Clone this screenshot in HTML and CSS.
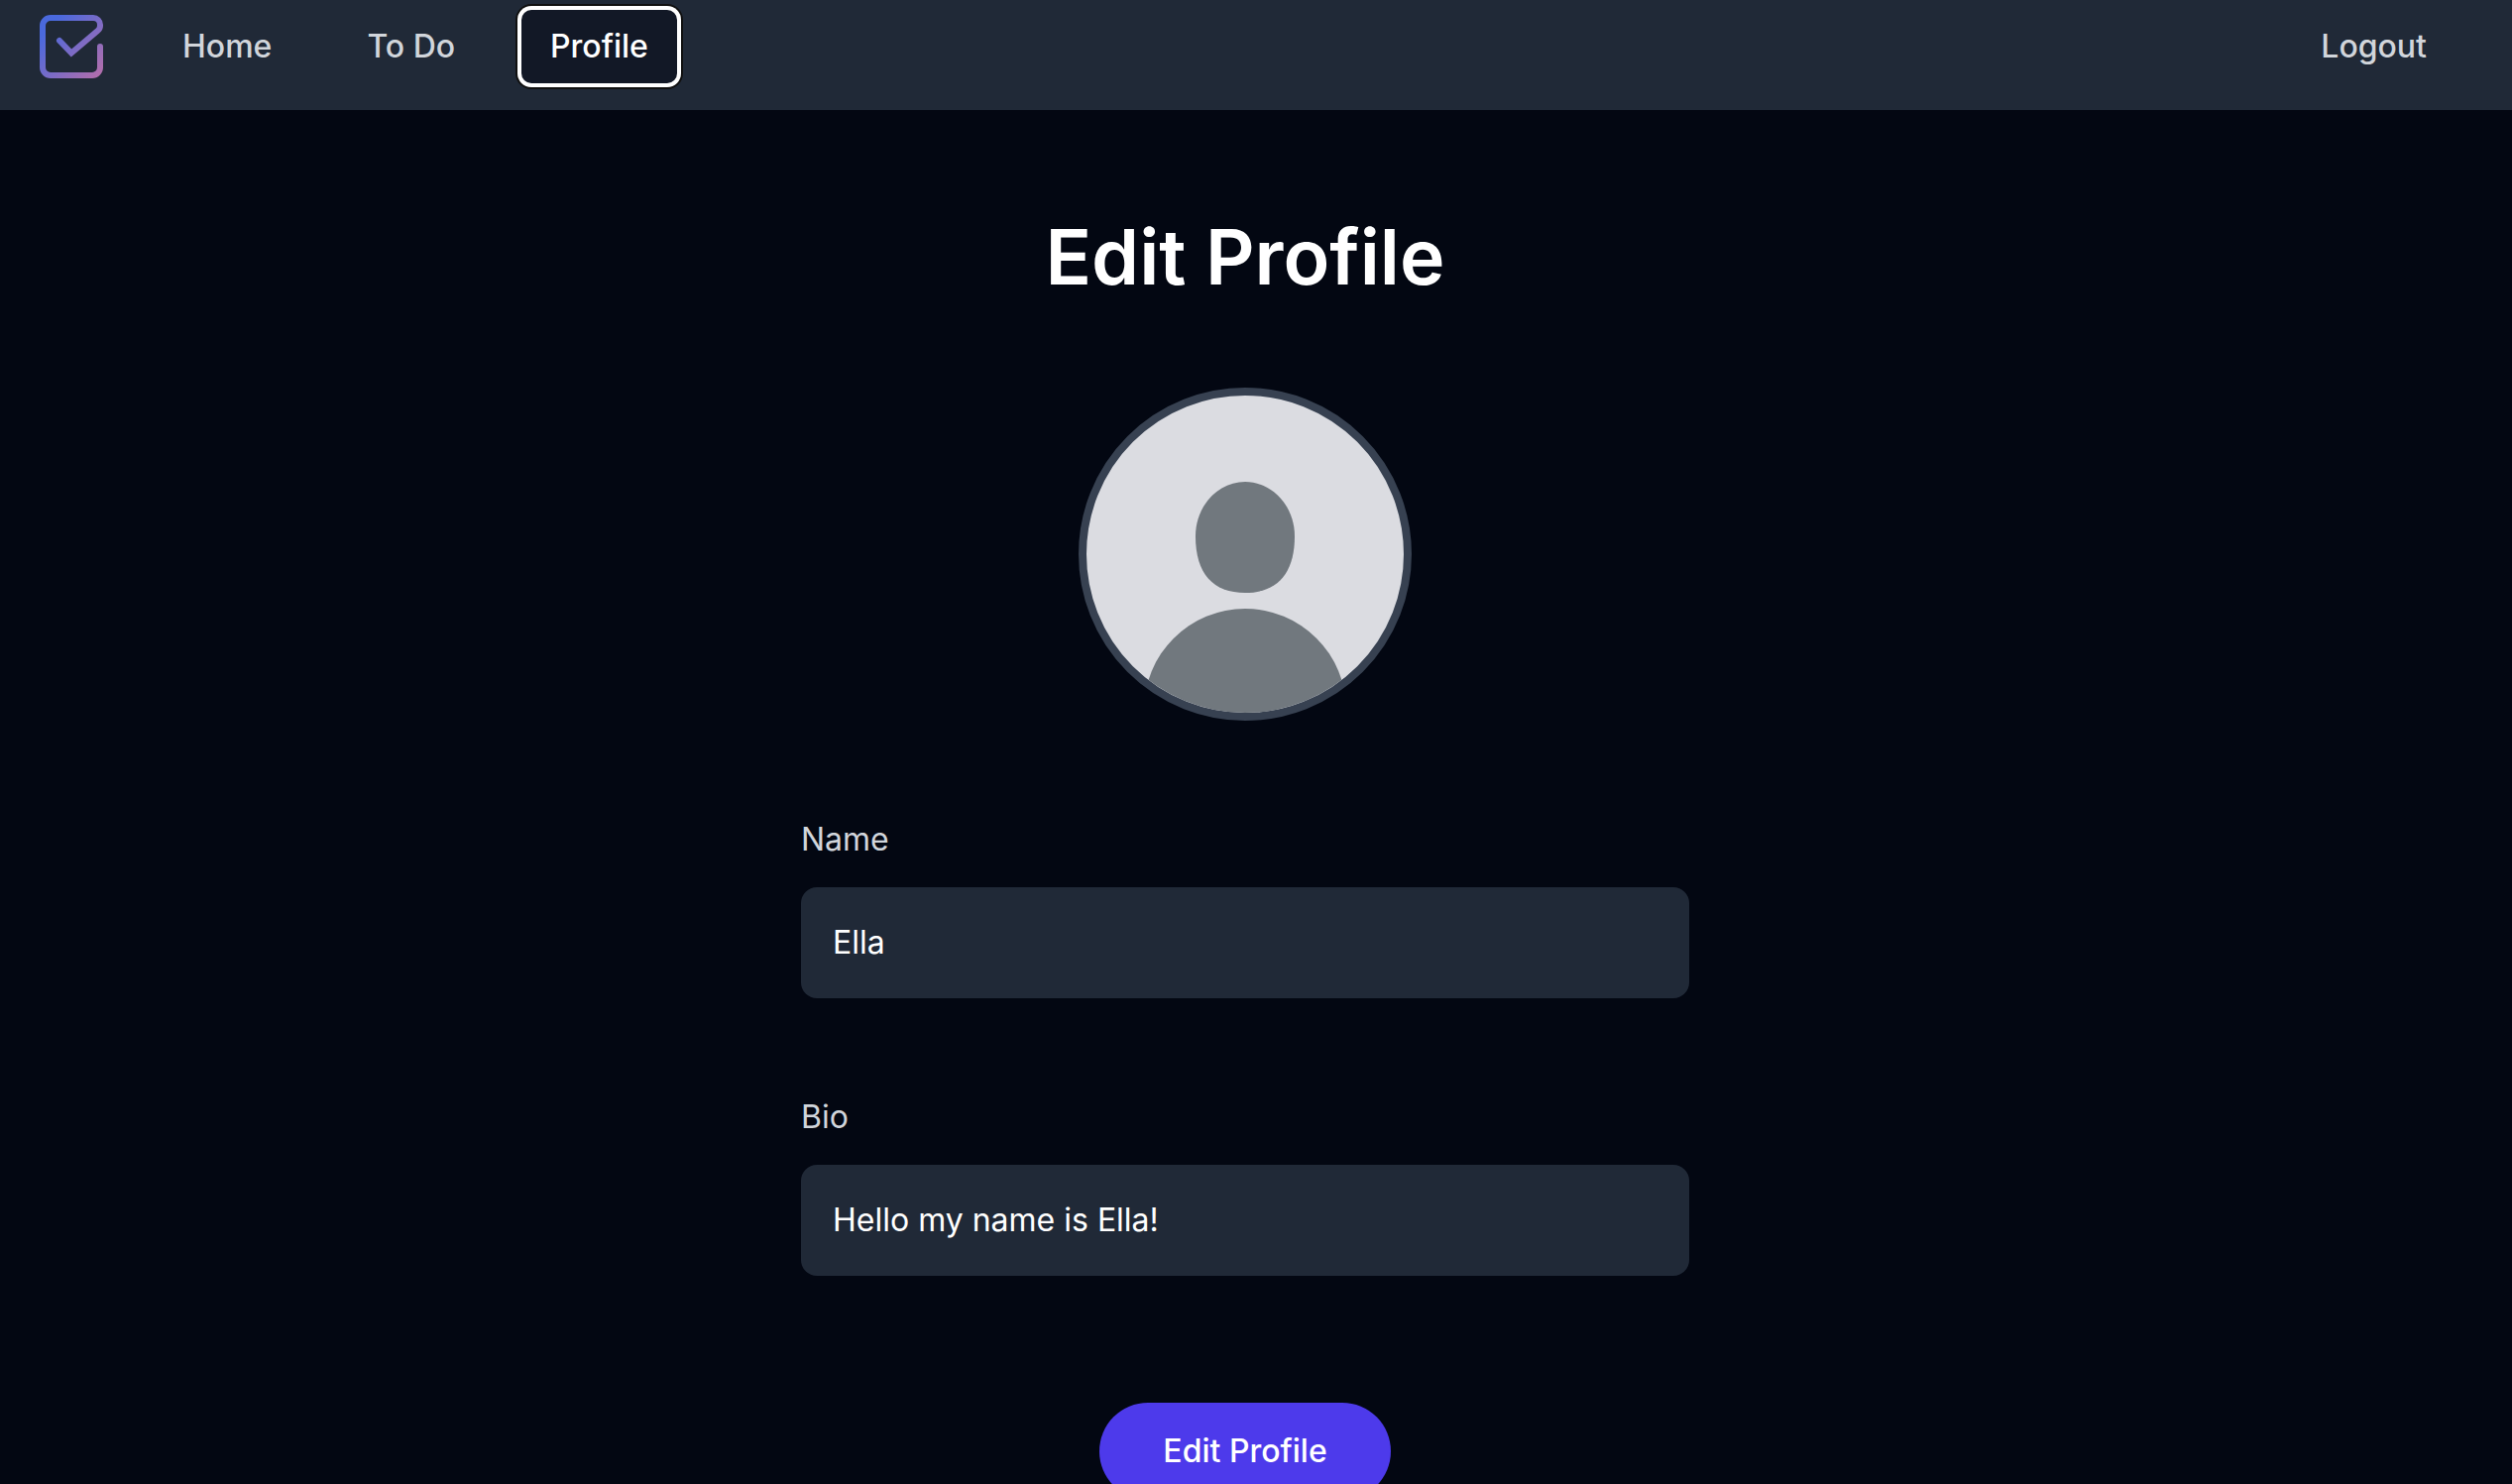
FILE: index.html
```html
<!DOCTYPE html>
<html lang="en">
<head>
  <meta charset="utf-8">
  <meta name="viewport" content="width=device-width, initial-scale=1">
  <title>Edit Profile</title>
  <link rel="stylesheet" href="styles.css">
</head>
<body>
  <header class="navbar">
    <a class="logo" href="#" aria-label="Home page">
      <svg viewBox="0 0 64 64" fill="none">
        <defs>
          <linearGradient id="logo-gradient" gradientUnits="userSpaceOnUse" x1="8" y1="14" x2="62" y2="62">
            <stop offset="0" stop-color="#4a69dd"/>
            <stop offset="1" stop-color="#b36eab"/>
          </linearGradient>
        </defs>
        <path d="M61 32V53a8 8 0 0 1-8 8H11a8 8 0 0 1-8-8V11a8 8 0 0 1 8-8H54a7 7 0 0 1 7 7v1q0 3-2.500 5L32 38.500 20 26" stroke="url(#logo-gradient)" stroke-width="6" stroke-linecap="round"/>
      </svg>
    </a>
    <nav class="nav-links">
      <a class="nav-link" href="#">Home</a>
      <a class="nav-link" href="#">To Do</a>
      <a class="nav-link nav-link-active" href="#" aria-current="page">Profile</a>
    </nav>
    <button class="nav-link logout" type="button">Logout</button>
  </header>

  <main class="page">
    <h1 class="title">Edit Profile</h1>
    <svg class="avatar" viewBox="0 0 320 320" role="img" aria-label="Profile picture">
      <path d="M160 87C187 87 210 111 210 142C210 180 192 199 160 199S110 180 110 142C110 111 133 87 160 87Z"/>
      <circle cx="160" cy="317" r="102"/>
    </svg>
    <form class="form">
      <div class="field">
        <label class="label" for="name">Name</label>
        <input class="input" id="name" type="text" value="Ella">
      </div>
      <div class="field">
        <label class="label" for="bio">Bio</label>
        <input class="input" id="bio" type="text" value="Hello my name is Ella!">
      </div>
      <button class="submit" type="button">Edit Profile</button>
    </form>
  </main>
</body>
</html>
```
FILE: styles.css
```css
* {
  box-sizing: border-box;
}

body {
  margin: 0;
  background: #030712;
  color: #fff;
  font-family: Inter, "Liberation Sans", sans-serif;
  font-size: 32px;
  line-height: 40px;
}

button,
input {
  font: inherit;
  color: inherit;
  border: 0;
}

.navbar {
  display: flex;
  align-items: center;
  padding: 10px 57px 27px 40px;
  background: #202937;
}

.logo svg {
  display: block;
  width: 64px;
  height: 64px;
}

.nav-links {
  display: flex;
  gap: 38px;
  margin-left: 51px;
}

.nav-link {
  padding: 16px 29px;
  border-radius: 10px;
  background: none;
  color: #d1d5db;
  font-weight: 500;
  line-height: 42px;
  text-decoration: none;
}

.nav-link-active {
  background: #121826;
  color: #fff;
  box-shadow: 0 0 0 4px #fff, 0 0 0 6px #101010;
}

.logout {
  margin-left: auto;
}

.page {
  display: flex;
  flex-direction: column;
  align-items: center;
  padding: 100px 22px 100px 0;
}

.title {
  margin: 0 0 84px;
  font-size: 77px;
  font-weight: 600;
  line-height: 96px;
}

.avatar {
  width: 336px;
  height: 336px;
  margin-bottom: 100px;
  border: 8px solid #374151;
  border-radius: 50%;
  background: #dbdce1;
  fill: #71787e;
}

.form {
  display: flex;
  flex-direction: column;
  gap: 100px;
  width: 100%;
  max-width: 896px;
}

.field {
  display: flex;
  flex-direction: column;
  gap: 28px;
}

.label {
  color: #d1d5db;
}

.input {
  width: 100%;
  padding: 36px 32px;
  border-radius: 16px;
  background: #202937;
  line-height: 40px;
}

.submit {
  align-self: center;
  margin-top: 28px;
  padding: 29px 64px;
  border-radius: 49px;
  background: #4d3aeb;
  font-weight: 500;
}
```
